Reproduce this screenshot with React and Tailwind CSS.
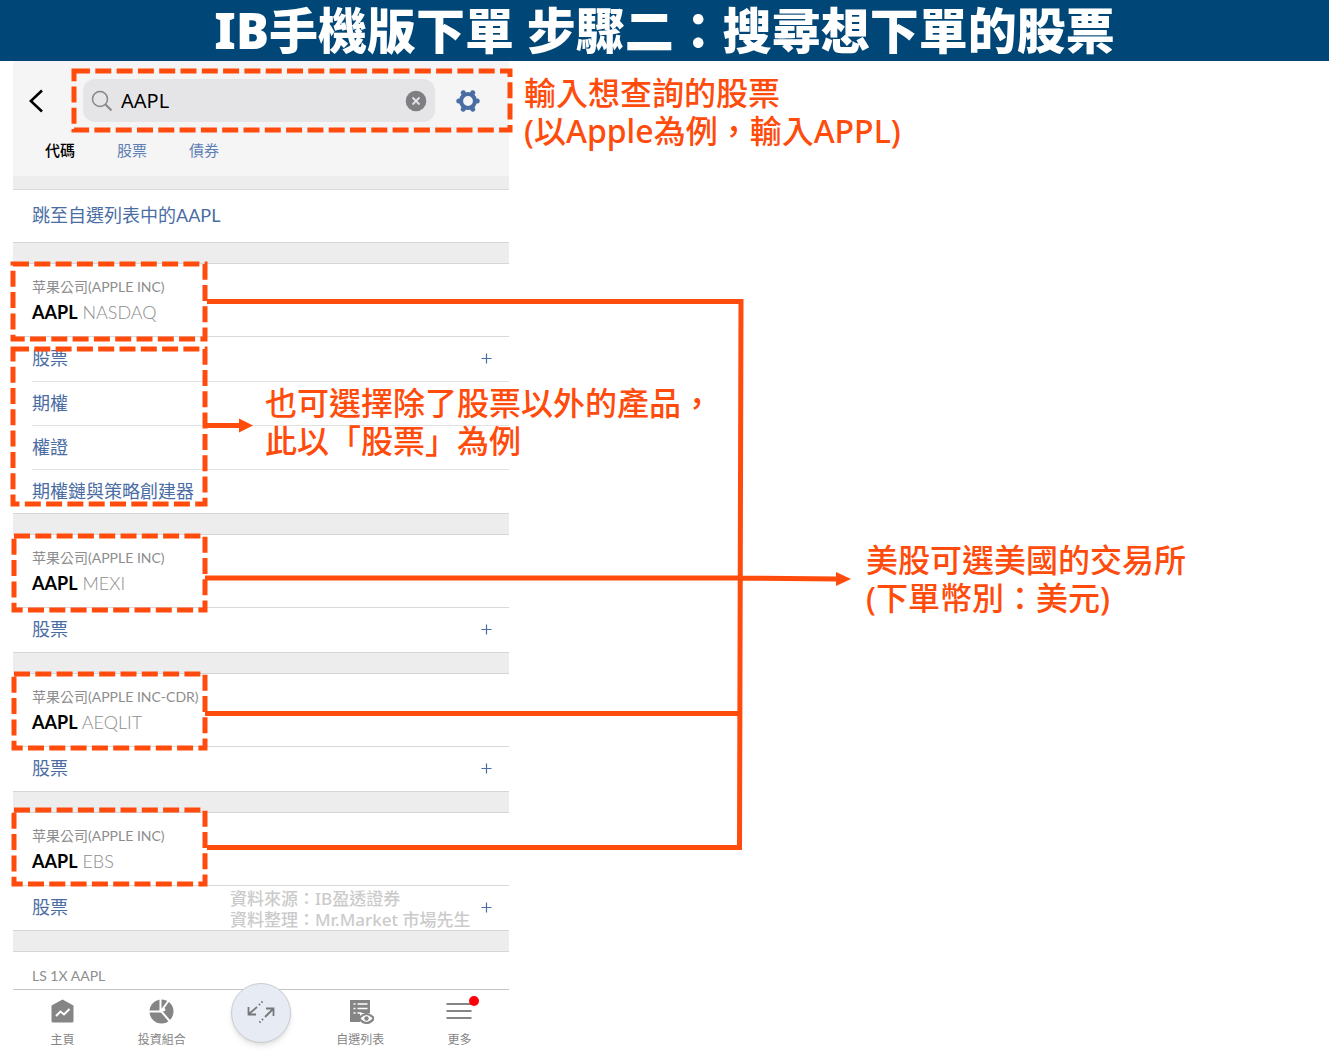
import React from "react";

const companies = [
  {
    name: "苹果公司(APPLE INC)",
    symbol: "AAPL",
    exchange: "NASDAQ",
    products: ["股票", "期權", "權證", "期權鏈與策略創建器"],
  },
  { name: "苹果公司(APPLE INC)", symbol: "AAPL", exchange: "MEXI", products: ["股票"] },
  { name: "苹果公司(APPLE INC-CDR)", symbol: "AAPL", exchange: "AEQLIT", products: ["股票"] },
  { name: "苹果公司(APPLE INC)", symbol: "AAPL", exchange: "EBS", products: ["股票"] },
];

// dashed frames drawn on top of the phone screen
const frames = [
  { x: 74, y: 71, width: 436, height: 59 },
  { x: 13, y: 264, width: 192, height: 75 },
  { x: 13, y: 349, width: 192, height: 155 },
  { x: 14, y: 536, width: 191, height: 74 },
  { x: 14, y: 674, width: 191, height: 74 },
  { x: 14, y: 810, width: 191, height: 74 },
];

function SearchHeader() {
  return (
    <div className="h-[115px] bg-[#f5f5f5] pt-[18px]">
      <div className="flex items-center pl-4 pr-7">
        <button aria-label="返回" className="w-4 shrink-0 text-black">
          <svg viewBox="0 0 16 24" className="h-6 w-4" fill="none" stroke="currentColor" strokeWidth="2.6">
            <path d="M13 1.5 1.8 12 13 22.5" />
          </svg>
        </button>

        <div className="ml-[38px] flex h-[43px] flex-1 items-center rounded-xl bg-[#e5e5e8] px-2">
          <svg viewBox="0 0 22 22" className="h-[22px] w-[22px] shrink-0" fill="none" stroke="#85858a" strokeWidth="1.5">
            <circle cx="9" cy="9" r="7.5" />
            <path d="m14.5 14.5 6 6" strokeWidth="2" />
          </svg>
          <input
            type="text"
            aria-label="搜尋"
            defaultValue="AAPL"
            className="ml-2 w-full min-w-0 bg-transparent font-['Noto_Sans','Noto_Sans_CJK_TC',sans-serif] text-xl text-black outline-none"
          />
          <button aria-label="清除" className="shrink-0">
            <svg viewBox="0 0 22 22" className="h-[22px] w-[22px]">
              <circle cx="11" cy="11" r="10.3" fill="#7f7f83" />
              <path d="m7.5 7.5 7 7m0-7-7 7" stroke="#e5e5e8" strokeWidth="1.8" />
            </svg>
          </button>
        </div>

        <button aria-label="設定" className="ml-5 shrink-0">
          <svg viewBox="-13 -13 26 26" className="h-[26px] w-[26px]" fill="none" stroke="#4a6da3">
            <circle r="7" strokeWidth="4.2" />
            <path
              d="M-9 0h-.2M9 0h.2M-4.6-8l-.1-.2M4.6-8l.1-.2M-4.6 8l-.1.2M4.6 8l.1.2"
              strokeWidth="5"
              strokeLinecap="round"
            />
          </svg>
        </button>
      </div>

      <div className="mt-4 flex gap-[42px] pl-8 text-[15px] leading-6 text-[#5f80b5]">
        <button className="font-medium text-black">代碼</button>
        <button>股票</button>
        <button>債券</button>
      </div>
    </div>
  );
}

function ProductRow({ label, first, addable }) {
  return (
    <div className="pl-[19px]">
      <div className={`flex h-11 items-center justify-between pb-0.5 pr-4 ${first ? "" : "border-t border-[#e2e2e2]"}`}>
        <a href="#" className="text-lg text-[#4a6da3]">{label}</a>
        {addable && (
          <button aria-label={`加入${label}`} className="w-[14px]">
            <svg viewBox="0 0 14 14" className="h-[14px] w-[14px]" stroke="#4a6da3" strokeWidth="1.2">
              <path d="M2.5 7.5h10M7.5 2.5v10" />
            </svg>
          </button>
        )}
      </div>
    </div>
  );
}

function Company({ name, symbol, exchange, products }) {
  return (
    <section>
      <div className="h-[22px] border-y border-[#d6d6d6] bg-[#ededed]" />
      <div className="h-[73px] border-b border-[#d9d9d9] pl-[19px] pt-[13px] text-[#8d8d8d]">
        <p className="text-sm leading-5">{name}</p>
        <p className="text-lg font-light leading-[30px]">
          <span className="font-bold text-black">{symbol}</span> {exchange}
        </p>
      </div>
      {products.map((p, i) => (
        <ProductRow key={p} label={p} first={i === 0} addable={i === 0} />
      ))}
    </section>
  );
}

function NavItem({ label, children }) {
  return (
    <button className="flex flex-col items-center pt-2 text-xs text-[#858585]">
      {children}
      <span className="mt-1 leading-5">{label}</span>
    </button>
  );
}

function BottomNav() {
  return (
    <nav className="grid h-[63px] grid-cols-5 border-t border-[#c4c4c4] bg-white">
      <NavItem label="主頁">
        <svg viewBox="0 0 28 28" className="h-7 w-7">
          <path d="M2.5 7.5 13.5 1.500l11 6V23a1.500 1.500 0 0 1-1.500 1.500H4A1.500 1.500 0 0 1 2.500 23Z" fill="#858585" />
          <path d="m7 18 4.5-4.5 3.500 3 5.500-5.500" fill="none" stroke="#fff" strokeWidth="2" />
        </svg>
      </NavItem>
      <NavItem label="投資組合">
        <svg viewBox="0 0 28 28" className="h-7 w-7">
          <circle cx="13.5" cy="13.5" r="12" fill="#858585" />
          <path d="M0 13.5h12.5V0M13 13l8.5-11.500M13 13l9 10.500" fill="none" stroke="#fff" strokeWidth="2" />
          <path d="m12 13 5-2" stroke="#fff" strokeWidth="3" />
        </svg>
      </NavItem>
      <div className="flex justify-center">
        <button
          aria-label="交易"
          className="-mt-[7px] flex h-[60px] w-[60px] items-center justify-center rounded-full border border-[#c9ccd2] bg-[#e6ebf4] shadow-md"
        >
          <svg viewBox="0 0 30 30" className="h-[30px] w-[30px]" fill="none" stroke="#77787c" strokeWidth="1.8">
            <path d="M2.5 9v7.5H10M3 16l8-7M20 10.5h7.5V18M27 11l-8 8" />
            <path d="m13 7 5-5M17 21l-5 5" strokeWidth="2" strokeDasharray="1.5 2" />
          </svg>
        </button>
      </div>
      <NavItem label="自選列表">
        <svg viewBox="0 0 28 28" className="h-7 w-7">
          <path d="M4 2h20v13H14v9H4Z" fill="#858585" />
          <path d="M7.5 6h2M11.5 6h10M7.5 10.5h2M11.5 10.5h10M7.5 15h2M11.5 15h4" stroke="#fff" strokeWidth="1.5" />
          <path d="M13 20.5q7.5-9 15 0-7.5 9-15 0Z" fill="#fff" stroke="#858585" strokeWidth="2.2" />
          <circle cx="20.5" cy="20.5" r="2.2" fill="#858585" />
        </svg>
      </NavItem>
      <NavItem label="更多">
        <span className="relative">
          <svg viewBox="0 0 28 28" className="h-7 w-7" stroke="#858585" strokeWidth="2">
            <path d="M1.5 6h25M1.5 13h25M1.5 20h25" />
          </svg>
          <span className="absolute -right-1.5 -top-0.5 h-[10px] w-[10px] rounded-full bg-[#fb0007]" />
        </span>
      </NavItem>
    </nav>
  );
}

function Annotations() {
  return (
    <div className="pointer-events-none absolute left-0 top-0 font-['Noto_Sans','Noto_Sans_CJK_TC',sans-serif] text-[#ff4b0b]">
      <svg width="860" height="900" fill="none" stroke="#ff4b0b" strokeWidth="5">
        {frames.map((f) => (
          <rect key={f.y} {...f} strokeDasharray="16 5.3" />
        ))}
        <path d="M207 301.5H741L739.5 850M205 578H740L838 579M205 713.5H740M207 847.5H740" />
        <path d="M207 425.5H242" />
        <path d="m239 418.5 14 7-14 7ZM836 572l15 7-15 7Z" fill="#ff4b0b" stroke="none" />
      </svg>
      <p className="absolute left-[524px] top-[74px] whitespace-nowrap text-[32px] font-medium leading-[38px]">
        輸入想查詢的股票
        <br />
        (以Apple為例，輸入APPL)
      </p>
      <p className="absolute left-[265px] top-[384px] whitespace-nowrap text-[32px] font-medium leading-[38px]">
        也可選擇除了股票以外的產品，
        <br />
        此以「股票」為例
      </p>
      <p className="absolute left-[866px] top-[541px] whitespace-nowrap text-[32px] font-medium leading-[38px]">
        美股可選美國的交易所
        <br />
        (下單幣別：美元)
      </p>
      <p className="absolute left-[230px] top-[888px] whitespace-nowrap text-[17px] font-medium leading-[21px] text-[#cbcbcb]">
        資料來源：IB盈透證券
        <br />
        資料整理：Mr.Market 市場先生
      </p>
    </div>
  );
}

export default function App() {
  return (
    <div lang="zh-Hant" className="relative min-h-screen overflow-hidden bg-white">
      <h1 className="flex h-[61px] items-center justify-center whitespace-nowrap bg-[#004777] font-['Noto_Sans','Noto_Sans_CJK_TC',sans-serif] text-[49px] font-black leading-[61px] text-white">
        IB手機版下單 步驟二：搜尋想下單的股票
      </h1>

      <main className="ml-[13px] max-w-[496px] font-['Lato','Noto_Sans_CJK_TC',sans-serif]">
        <SearchHeader />
        <div className="h-[14px] border-b border-[#d9d9d9] bg-[#ededed]" />
        <div className="flex h-[52px] items-center pb-0.5 pl-[19px]">
          <a href="#" className="text-lg text-[#4a6da3]">跳至自選列表中的AAPL</a>
        </div>
        {companies.map((c) => (
          <Company key={c.exchange} {...c} />
        ))}
        <div className="h-[22px] border-y border-[#d6d6d6] bg-[#ededed]" />
        <p className="h-[37px] pl-[19px] pt-3 text-sm leading-6 text-[#8d8d8d]">LS 1X AAPL</p>
        <BottomNav />
      </main>

      <Annotations />
    </div>
  );
}
